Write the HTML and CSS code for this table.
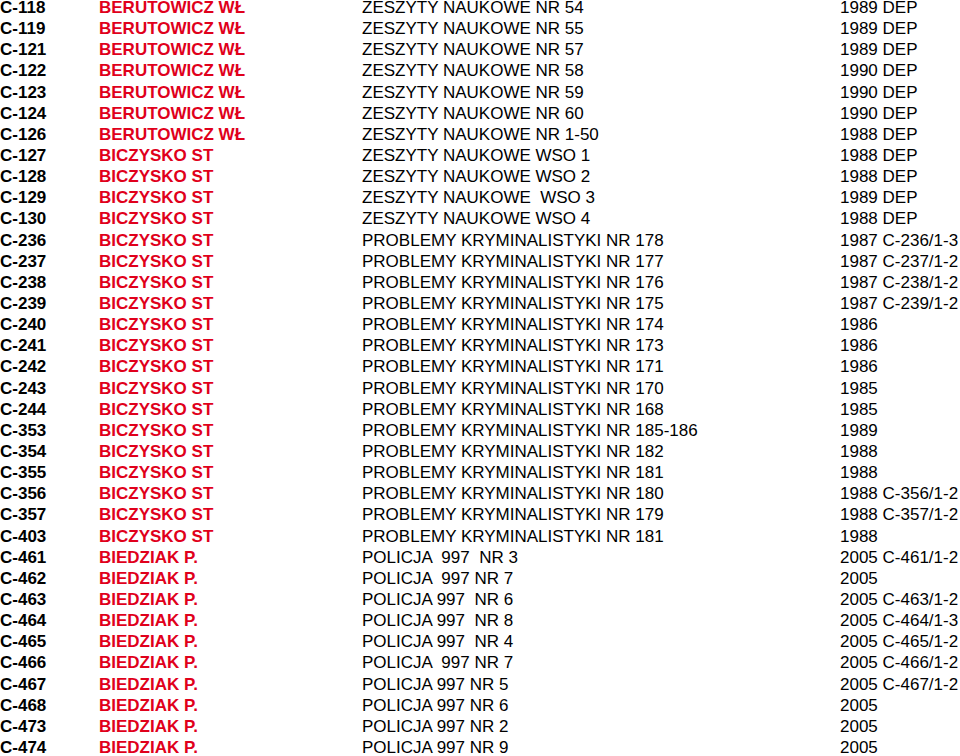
FILE: index.html
```html
<!DOCTYPE html>
<html lang="pl">
<head>
    <meta charset="UTF-8">
    <title>Wykaz czasopism</title>
    <link rel="stylesheet" href="styles.css">
</head>
<body>
    <div class="list">
        <div class="row"><span class="sig">C-118</span><span class="author">BERUTOWICZ WŁ</span><span class="title">ZESZYTY NAUKOWE NR 54</span><span class="note">1989 DEP</span></div>
        <div class="row"><span class="sig">C-119</span><span class="author">BERUTOWICZ WŁ</span><span class="title">ZESZYTY NAUKOWE NR 55</span><span class="note">1989 DEP</span></div>
        <div class="row"><span class="sig">C-121</span><span class="author">BERUTOWICZ WŁ</span><span class="title">ZESZYTY NAUKOWE NR 57</span><span class="note">1989 DEP</span></div>
        <div class="row"><span class="sig">C-122</span><span class="author">BERUTOWICZ WŁ</span><span class="title">ZESZYTY NAUKOWE NR 58</span><span class="note">1990 DEP</span></div>
        <div class="row"><span class="sig">C-123</span><span class="author">BERUTOWICZ WŁ</span><span class="title">ZESZYTY NAUKOWE NR 59</span><span class="note">1990 DEP</span></div>
        <div class="row"><span class="sig">C-124</span><span class="author">BERUTOWICZ WŁ</span><span class="title">ZESZYTY NAUKOWE NR 60</span><span class="note">1990 DEP</span></div>
        <div class="row"><span class="sig">C-126</span><span class="author">BERUTOWICZ WŁ</span><span class="title">ZESZYTY NAUKOWE NR 1-50</span><span class="note">1988 DEP</span></div>
        <div class="row"><span class="sig">C-127</span><span class="author">BICZYSKO ST</span><span class="title">ZESZYTY NAUKOWE WSO 1</span><span class="note">1988 DEP</span></div>
        <div class="row"><span class="sig">C-128</span><span class="author">BICZYSKO ST</span><span class="title">ZESZYTY NAUKOWE WSO 2</span><span class="note">1988 DEP</span></div>
        <div class="row"><span class="sig">C-129</span><span class="author">BICZYSKO ST</span><span class="title">ZESZYTY NAUKOWE  WSO 3</span><span class="note">1989 DEP</span></div>
        <div class="row"><span class="sig">C-130</span><span class="author">BICZYSKO ST</span><span class="title">ZESZYTY NAUKOWE WSO 4</span><span class="note">1988 DEP</span></div>
        <div class="row"><span class="sig">C-236</span><span class="author">BICZYSKO ST</span><span class="title">PROBLEMY KRYMINALISTYKI NR 178</span><span class="note">1987 C-236/1-3</span></div>
        <div class="row"><span class="sig">C-237</span><span class="author">BICZYSKO ST</span><span class="title">PROBLEMY KRYMINALISTYKI NR 177</span><span class="note">1987 C-237/1-2</span></div>
        <div class="row"><span class="sig">C-238</span><span class="author">BICZYSKO ST</span><span class="title">PROBLEMY KRYMINALISTYKI NR 176</span><span class="note">1987 C-238/1-2</span></div>
        <div class="row"><span class="sig">C-239</span><span class="author">BICZYSKO ST</span><span class="title">PROBLEMY KRYMINALISTYKI NR 175</span><span class="note">1987 C-239/1-2</span></div>
        <div class="row"><span class="sig">C-240</span><span class="author">BICZYSKO ST</span><span class="title">PROBLEMY KRYMINALISTYKI NR 174</span><span class="note">1986</span></div>
        <div class="row"><span class="sig">C-241</span><span class="author">BICZYSKO ST</span><span class="title">PROBLEMY KRYMINALISTYKI NR 173</span><span class="note">1986</span></div>
        <div class="row"><span class="sig">C-242</span><span class="author">BICZYSKO ST</span><span class="title">PROBLEMY KRYMINALISTYKI NR 171</span><span class="note">1986</span></div>
        <div class="row"><span class="sig">C-243</span><span class="author">BICZYSKO ST</span><span class="title">PROBLEMY KRYMINALISTYKI NR 170</span><span class="note">1985</span></div>
        <div class="row"><span class="sig">C-244</span><span class="author">BICZYSKO ST</span><span class="title">PROBLEMY KRYMINALISTYKI NR 168</span><span class="note">1985</span></div>
        <div class="row"><span class="sig">C-353</span><span class="author">BICZYSKO ST</span><span class="title">PROBLEMY KRYMINALISTYKI NR 185-186</span><span class="note">1989</span></div>
        <div class="row"><span class="sig">C-354</span><span class="author">BICZYSKO ST</span><span class="title">PROBLEMY KRYMINALISTYKI NR 182</span><span class="note">1988</span></div>
        <div class="row"><span class="sig">C-355</span><span class="author">BICZYSKO ST</span><span class="title">PROBLEMY KRYMINALISTYKI NR 181</span><span class="note">1988</span></div>
        <div class="row"><span class="sig">C-356</span><span class="author">BICZYSKO ST</span><span class="title">PROBLEMY KRYMINALISTYKI NR 180</span><span class="note">1988 C-356/1-2</span></div>
        <div class="row"><span class="sig">C-357</span><span class="author">BICZYSKO ST</span><span class="title">PROBLEMY KRYMINALISTYKI NR 179</span><span class="note">1988 C-357/1-2</span></div>
        <div class="row"><span class="sig">C-403</span><span class="author">BICZYSKO ST</span><span class="title">PROBLEMY KRYMINALISTYKI NR 181</span><span class="note">1988</span></div>
        <div class="row"><span class="sig">C-461</span><span class="author">BIEDZIAK P.</span><span class="title">POLICJA  997  NR 3</span><span class="note">2005 C-461/1-2</span></div>
        <div class="row"><span class="sig">C-462</span><span class="author">BIEDZIAK P.</span><span class="title">POLICJA  997 NR 7</span><span class="note">2005</span></div>
        <div class="row"><span class="sig">C-463</span><span class="author">BIEDZIAK P.</span><span class="title">POLICJA 997  NR 6</span><span class="note">2005 C-463/1-2</span></div>
        <div class="row"><span class="sig">C-464</span><span class="author">BIEDZIAK P.</span><span class="title">POLICJA 997  NR 8</span><span class="note">2005 C-464/1-3</span></div>
        <div class="row"><span class="sig">C-465</span><span class="author">BIEDZIAK P.</span><span class="title">POLICJA 997  NR 4</span><span class="note">2005 C-465/1-2</span></div>
        <div class="row"><span class="sig">C-466</span><span class="author">BIEDZIAK P.</span><span class="title">POLICJA  997 NR 7</span><span class="note">2005 C-466/1-2</span></div>
        <div class="row"><span class="sig">C-467</span><span class="author">BIEDZIAK P.</span><span class="title">POLICJA 997 NR 5</span><span class="note">2005 C-467/1-2</span></div>
        <div class="row"><span class="sig">C-468</span><span class="author">BIEDZIAK P.</span><span class="title">POLICJA 997 NR 6</span><span class="note">2005</span></div>
        <div class="row"><span class="sig">C-473</span><span class="author">BIEDZIAK P.</span><span class="title">POLICJA 997 NR 2</span><span class="note">2005</span></div>
        <div class="row"><span class="sig">C-474</span><span class="author">BIEDZIAK P.</span><span class="title">POLICJA 997 NR 9</span><span class="note">2005</span></div>
    </div>
</body>
</html>
```

FILE: styles.css
```css
body {
    font-family: 'Liberation Sans', Arial, sans-serif;
    margin: 0;
    background: #fff;
    color: #000;
    overflow: hidden;
}
.list {
    margin-top: -3px; /* la primera fila queda cortada arriba */
}
.row {
    display: grid;
    grid-template-columns: 99px 263px 478px auto;
    font-size: 17px;
    line-height: 21.14px;
    white-space: pre;
}
.sig {
    font-weight: bold;
}
.author {
    font-weight: bold;
    color: #e0001b;
}
```
